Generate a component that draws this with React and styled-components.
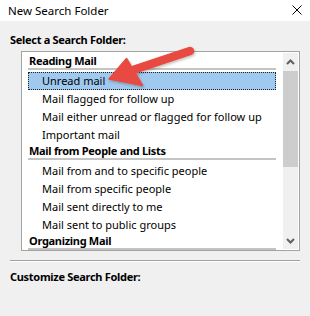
import React from "react";
import styled, { createGlobalStyle } from "styled-components";

const GlobalStyle = createGlobalStyle`
  html, body { margin: 0; padding: 0; }
  body {
    background: #f0f0f0;
    width: 310px;
    height: 316px;
    overflow: hidden;
    font-family: "Noto Sans", "Liberation Sans", sans-serif;
    color: #000;
  }
`;

const Window = styled.div`
  position: relative;
  width: 310px;
  height: 316px;
  background: #f0f0f0;
  display: flex;
  flex-direction: column;
`;

const TitleBar = styled.div`
  height: 21px;
  background: #fff;
  display: flex;
  align-items: center;
  justify-content: space-between;
  padding: 0 8px;
  font-size: 11.5px;
  color: #000;
`;

const CloseIcon = styled.svg`
  width: 10px;
  height: 10px;
  display: block;
  margin-top: -2px;
`;

const Body = styled.div`
  padding: 0 10px;
  display: flex;
  flex-direction: column;
`;

const Label = styled.div`
  font-weight: 700;
  font-size: 11px;
  line-height: 16px;
  letter-spacing: -0.3px;
  margin-top: ${(p) => p.$top}px;
`;

const ListBox = styled.div`
  box-sizing: border-box;
  margin: 3px 0 0 11px;
  width: 279px;
  height: 200px;
  border: 1px solid #a3a3a3;
  background: #fff;
  display: flex;
`;

const ListContent = styled.div`
  width: 248px;
  margin-right: 7px;
  padding: 2px 0 0 6px;
  overflow: hidden;
`;

const GroupHeader = styled.div`
  height: 14px;
  line-height: 14px;
  padding-left: 1px;
  font-weight: 700;
  font-size: 11px;
  letter-spacing: -0.3px;
  border-bottom: 2px solid #c4c4c4;
  margin-bottom: 2px;
  white-space: nowrap;
`;

const Item = styled.div`
  box-sizing: border-box;
  height: 18px;
  line-height: 16px;
  padding-left: 13px;
  font-size: 11px;
  white-space: nowrap;
  border: 1px dotted ${(p) => (p.$selected ? "#222" : "transparent")};
  background: ${(p) => (p.$selected ? "#9fc9ef" : "transparent")};
`;

const Scrollbar = styled.div`
  width: 15px;
  margin: 1px 0;
  background: #f0f0f0;
  display: flex;
  flex-direction: column;
`;

const ScrollButton = styled.div`
  height: ${(p) => p.$h}px;
  display: flex;
  align-items: center;
  justify-content: center;
`;

const Thumb = styled.div`
  height: 96px;
  background: #cdcdcd;
`;

const Track = styled.div`
  flex: 1;
`;

const Rule = styled.div`
  margin-top: 9px;
  border-top: 1px solid #a0a0a0;
  border-bottom: 1px solid #fff;
`;

const ArrowOverlay = styled.svg`
  position: absolute;
  left: 0;
  top: 0;
  width: 310px;
  height: 316px;
  pointer-events: none;
`;

const Chevron = ({ up }) => (
  <svg width="9" height="6" viewBox="0 0 9 6">
    <path
      d={up ? "M1 5 L4.5 1.5 L8 5" : "M1 1 L4.5 4.5 L8 1"}
      fill="none"
      stroke="#606060"
      strokeWidth="2"
    />
  </svg>
);

const groups = [
  {
    title: "Reading Mail",
    items: [
      "Unread mail",
      "Mail flagged for follow up",
      "Mail either unread or flagged for follow up",
      "Important mail",
    ],
  },
  {
    title: "Mail from People and Lists",
    items: [
      "Mail from and to specific people",
      "Mail from specific people",
      "Mail sent directly to me",
      "Mail sent to public groups",
    ],
  },
  {
    title: "Organizing Mail",
    items: [],
  },
];

export default function App() {
  return (
    <>
      <GlobalStyle />
      <Window>
        <TitleBar>
          <span>New Search Folder</span>
          <CloseIcon viewBox="0 0 10 10">
            <path d="M0.5 0.5 L9.5 9.5 M9.5 0.5 L0.5 9.5" stroke="#000" strokeWidth="1" />
          </CloseIcon>
        </TitleBar>
        <Body>
          <Label $top={11}>Select a Search Folder:</Label>
          <ListBox>
            <ListContent>
              {groups.map((g) => (
                <React.Fragment key={g.title}>
                  <GroupHeader>{g.title}</GroupHeader>
                  {g.items.map((it) => (
                    <Item key={it} $selected={it === "Unread mail"}>
                      {it}
                    </Item>
                  ))}
                </React.Fragment>
              ))}
            </ListContent>
            <Scrollbar>
              <ScrollButton $h={18}>
                <Chevron up />
              </ScrollButton>
              <Thumb />
              <Track />
              <ScrollButton $h={17}>
                <Chevron />
              </ScrollButton>
            </Scrollbar>
          </ListBox>
          <Rule />
          <Label $top={7}>Customize Search Folder:</Label>
        </Body>
        <ArrowOverlay viewBox="0 0 310 316">
          <defs>
            <filter id="sh" x="-20%" y="-20%" width="140%" height="140%">
              <feDropShadow dx="1" dy="1.5" stdDeviation="1" floodColor="#000" floodOpacity="0.25" />
            </filter>
          </defs>
          <g filter="url(#sh)" fill="#e8493f" stroke="#e8493f">
            <line x1="133" y1="70" x2="190" y2="51" strokeWidth="8.5" strokeLinecap="round" />
            <polygon points="109,79 126.5,58.5 142.5,85.5" strokeWidth="1.5" strokeLinejoin="round" />
          </g>
        </ArrowOverlay>
      </Window>
    </>
  );
}
